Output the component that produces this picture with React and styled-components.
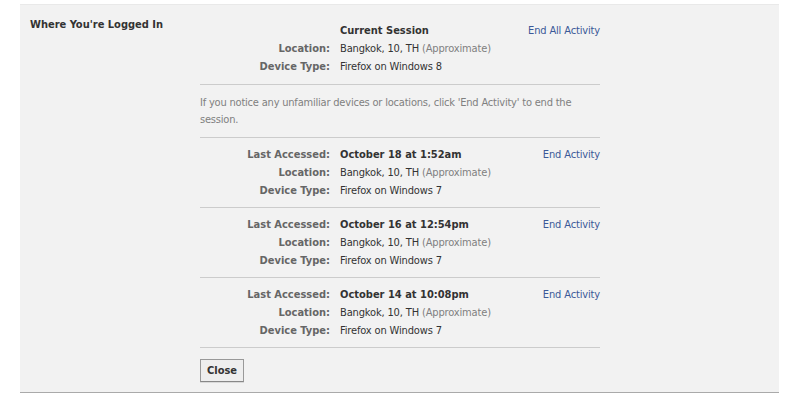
import React from 'react'
import styled, { createGlobalStyle } from 'styled-components'

const GlobalStyle = createGlobalStyle`
  html, body {
    margin: 0;
    padding: 0;
    background: #fff;
  }
  body {
    font-family: 'DejaVu Sans Condensed', 'DejaVu Sans', sans-serif;
    font-size: 11px;
    color: #333;
  }
`

const sessions = [
  { accessed: 'October 18 at 1:52am', device: 'Firefox on Windows 7' },
  { accessed: 'October 16 at 12:54pm', device: 'Firefox on Windows 7' },
  { accessed: 'October 14 at 10:08pm', device: 'Firefox on Windows 7' },
]

const App = () => {
  return (
    <Page>
      <GlobalStyle />
      <Panel>
        <Heading>Where You're Logged In</Heading>
        <Content>
          <Block $first>
            <Label />
            <Strong>Current Session</Strong>
            <Action href='#'>End All Activity</Action>
            <Label>Location:</Label>
            <Value>
              Bangkok, 10, TH <Muted>(Approximate)</Muted>
            </Value>
            <span />
            <Label>Device Type:</Label>
            <Value>Firefox on Windows 8</Value>
            <span />
          </Block>
          <Notice>
            If you notice any unfamiliar devices or locations, click 'End Activity' to end the
            session.
          </Notice>
          {sessions.map((s) => (
            <Block key={s.accessed}>
              <Label>Last Accessed:</Label>
              <Strong>{s.accessed}</Strong>
              <Action href='#'>End Activity</Action>
              <Label>Location:</Label>
              <Value>
                Bangkok, 10, TH <Muted>(Approximate)</Muted>
              </Value>
              <span />
              <Label>Device Type:</Label>
              <Value>{s.device}</Value>
              <span />
            </Block>
          ))}
          <Footer>
            <CloseButton type='button'>Close</CloseButton>
          </Footer>
        </Content>
      </Panel>
    </Page>
  )
}

const Page = styled.div`
  padding: 4px 10px 0 20px;
`

const Panel = styled.section`
  display: grid;
  grid-template-columns: 170px 400px;
  align-items: start;
  padding: 13px 10px 10px;
  background: #f2f2f2;
  border-top: 1px solid #e9e9e9;
  border-bottom: 1px solid #aaa;
`

const Heading = styled.h3`
  margin: 0;
  font-size: 11px;
  font-weight: bold;
  color: #333;
  line-height: 14px;
`

const Content = styled.div`
  display: flex;
  flex-direction: column;
  padding-top: 3px;
`

const Block = styled.div`
  display: grid;
  grid-template-columns: 130px 1fr auto;
  column-gap: 10px;
  grid-auto-rows: 18px;
  align-items: center;
  padding: ${(p) => (p.$first ? '0 0 9px' : '7px 0 8px')};
  border-bottom: 1px solid #ccc;
`

const Label = styled.span`
  text-align: right;
  font-weight: bold;
  color: #666;
`

const Strong = styled.span`
  font-weight: bold;
  color: #333;
`

const Value = styled.span`
  color: #333;
  letter-spacing: -0.15px;
`

const Muted = styled.span`
  color: #808080;
`

const Action = styled.a`
  color: #3b5998;
  text-decoration: none;
  text-align: right;
  letter-spacing: -0.15px;
`

const Notice = styled.p`
  margin: 0;
  padding: 9px 0;
  line-height: 17px;
  color: #808080;
  letter-spacing: -0.2px;
  border-bottom: 1px solid #ccc;
`

const Footer = styled.div`
  padding-top: 11px;
`

const CloseButton = styled.button`
  height: 23px;
  padding: 0 6px;
  font-family: inherit;
  font-size: 11px;
  font-weight: bold;
  color: #333;
  background: #eee;
  border: 1px solid #999;
  border-bottom-color: #888;
  box-shadow: 0 1px 0 rgba(0, 0, 0, 0.1);
  cursor: pointer;
`

export default App
